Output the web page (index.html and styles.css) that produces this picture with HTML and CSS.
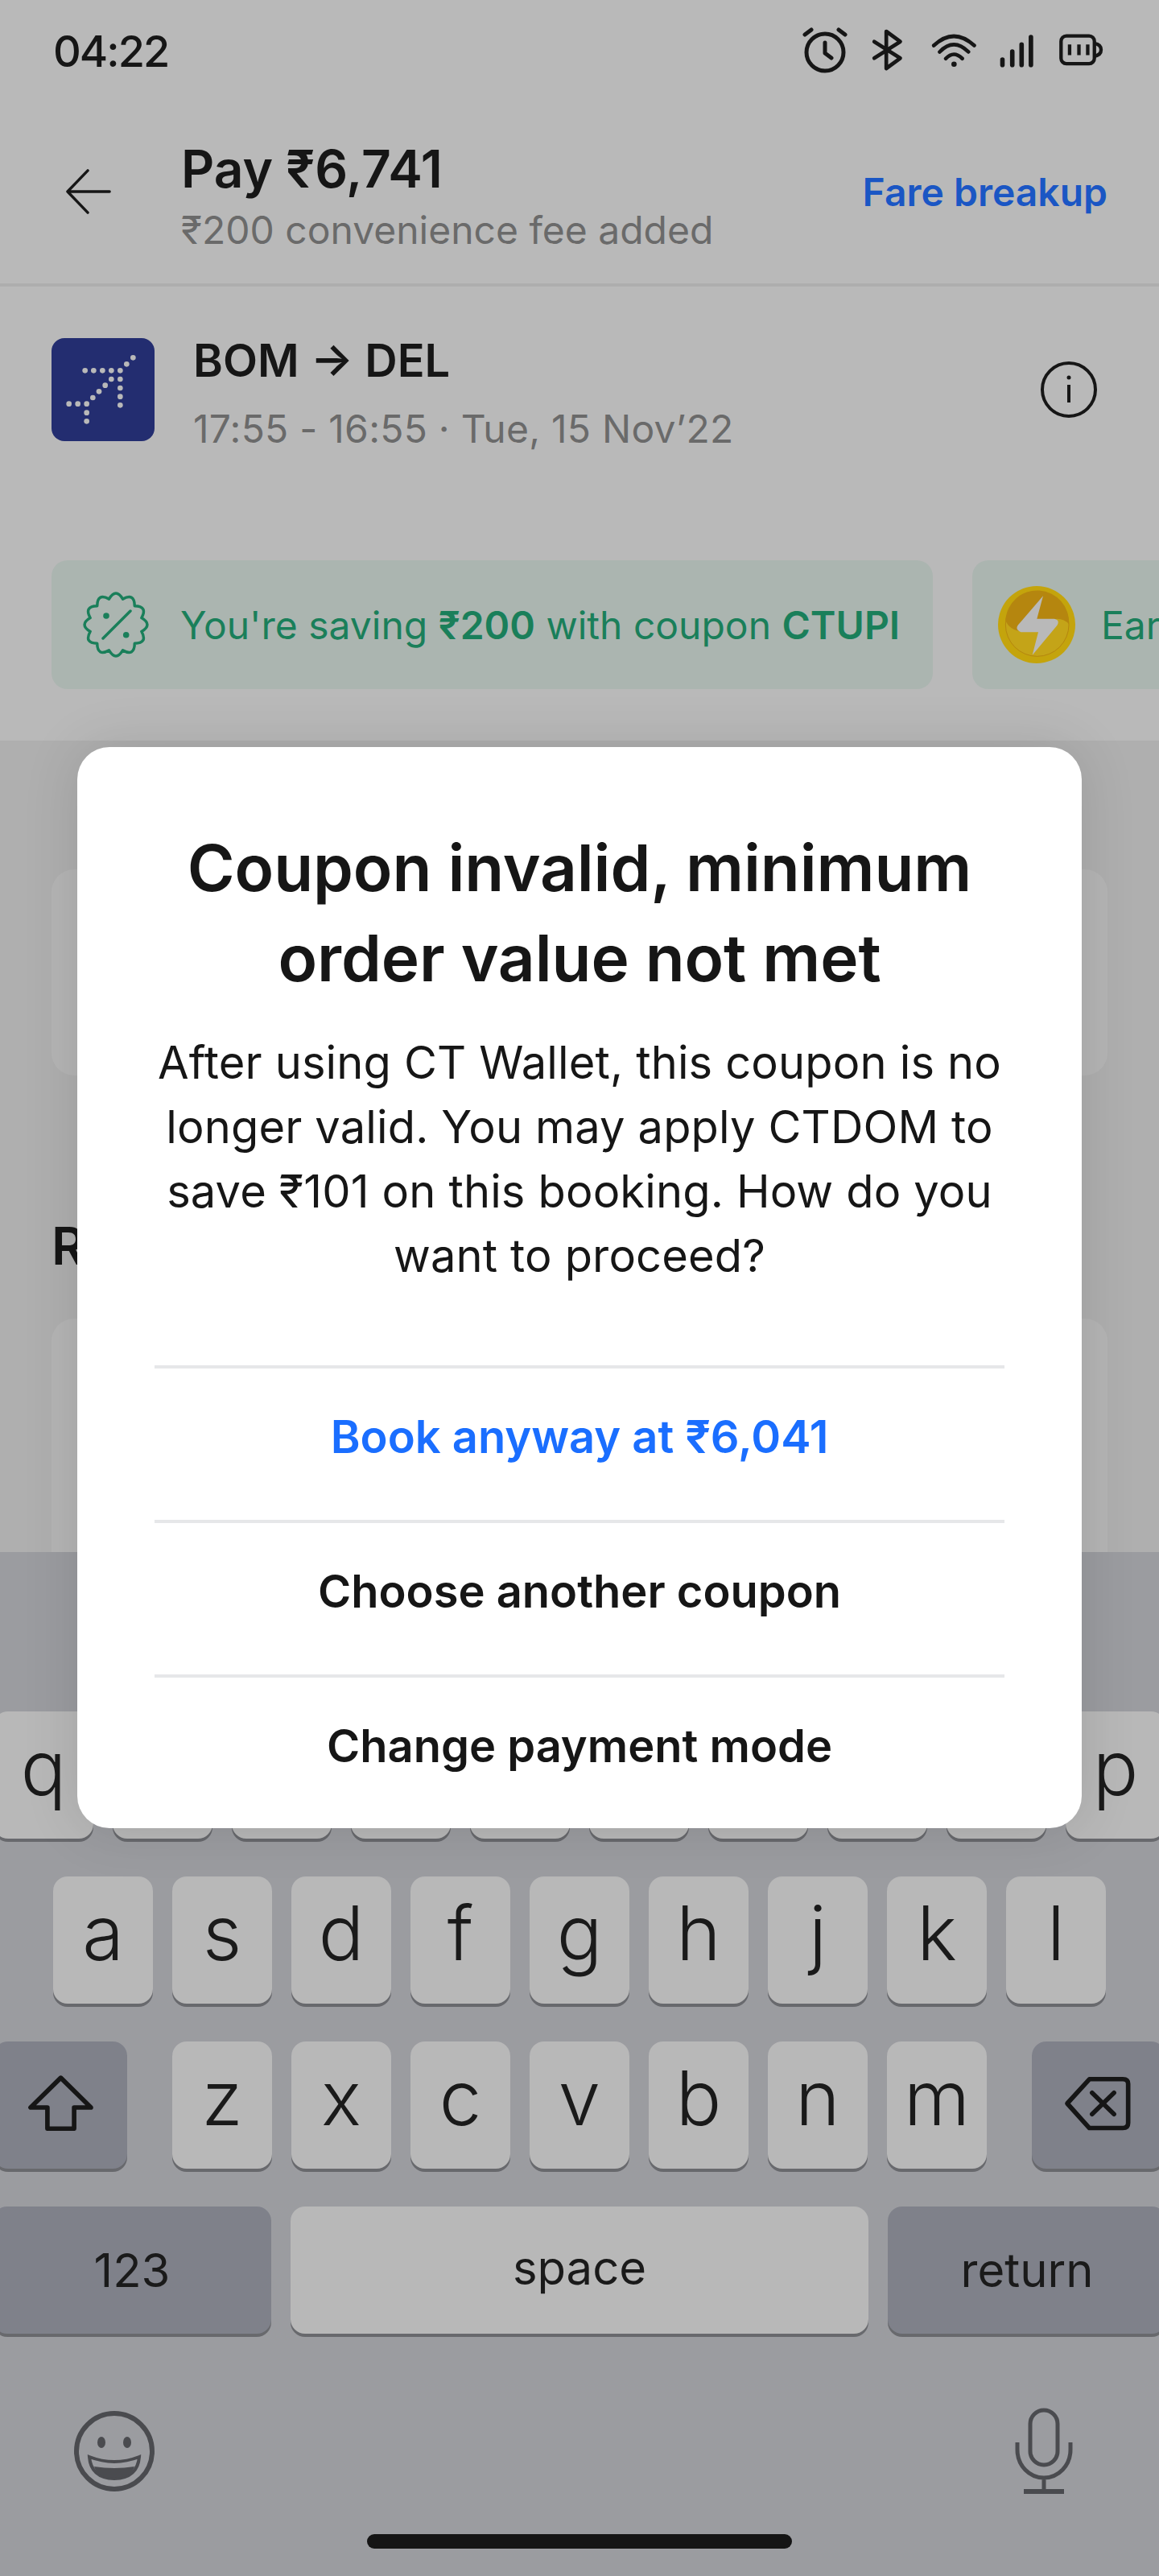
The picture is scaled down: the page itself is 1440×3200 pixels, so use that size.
FILE: index.html
```html
<!DOCTYPE html>
<html lang="en">
<head>
    <meta charset="UTF-8">
    <meta name="viewport" content="width=device-width, initial-scale=1.0">
    <title>Pay - Coupon invalid</title>
    <link rel="stylesheet" href="styles.css">
</head>
<body>
    <div class="screen">
        <div class="status-bar">
            <span class="status-time">04:22</span>
            <div class="status-icons">
                <svg class="icon-alarm" viewBox="0 0 60 60" fill="none" stroke="#161616" stroke-width="5" stroke-linecap="round" stroke-linejoin="round">
                    <circle cx="30" cy="33" r="23"/>
                    <path d="M30 21v13l8 6M5 11l8-6M55 11l-8-6"/>
                </svg>
                <svg class="icon-bt" viewBox="370 50 125 165" fill="none" stroke="#161616" stroke-width="14" stroke-linecap="round" stroke-linejoin="round">
                    <path d="M385 100L482 162L430 200V62L482 100L385 162"/>
                </svg>
                <svg class="icon-wifi" viewBox="580 60 180 130" fill="none" stroke="#161616" stroke-width="14" stroke-linecap="round">
                    <path d="M595 107Q670 37 747 107M617 131Q670 76 725 131M640 156Q670 124 702 156"/>
                    <circle cx="671" cy="177" r="10" fill="#161616" stroke="none"/>
                </svg>
                <svg class="icon-signal" viewBox="845 65 135 130" fill="none" stroke="#161616" stroke-width="17" stroke-linecap="round">
                    <path d="M858 165V185M895 135V185M930 108V185M965 80V185"/>
                </svg>
                <svg class="icon-battery" viewBox="1065 70 175 125" fill="none" stroke="#161616" stroke-width="13" stroke-linejoin="round">
                    <rect x="1078" y="80" width="125" height="104" rx="20"/>
                    <path d="M1203 108Q1228 112 1228 132Q1228 152 1203 156"/>
                    <path d="M1110 112V152M1145 112V152M1178 112V152"/>
                </svg>
            </div>
        </div>

        <div class="pay-header">
            <svg class="back-arrow" viewBox="0 0 60 60" fill="none" stroke="#161616" stroke-width="3.5" stroke-linecap="round" stroke-linejoin="round">
                <path d="M28 3L2 30L28 57M2 30H56"/>
            </svg>
            <div class="pay-title">
                <div class="pay-amount">Pay ₹6,741</div>
                <div class="pay-fee">₹200 convenience fee added</div>
            </div>
            <span class="fare-link">Fare breakup</span>
        </div>

        <div class="flight-row">
            <svg class="airline-logo" viewBox="72 60 384 384">
                <rect x="72" y="60" width="384" height="384" rx="48" fill="#232d70"/>
                <g fill="#b9b9b9">
                    <circle cx="197" cy="181" r="10"/><circle cx="229" cy="181" r="10"/><circle cx="262" cy="181" r="10"/>
                    <circle cx="295" cy="181" r="10"/><circle cx="328" cy="181" r="10"/><circle cx="295" cy="213" r="10"/>
                    <circle cx="328" cy="213" r="10"/><circle cx="328" cy="246" r="10"/><circle cx="328" cy="278" r="10"/>
                    <circle cx="328" cy="310" r="10"/><circle cx="272" cy="236" r="10"/><circle cx="249" cy="259" r="10"/>
                    <circle cx="226" cy="282" r="10"/><circle cx="203" cy="305" r="10"/><circle cx="170" cy="305" r="10"/>
                    <circle cx="137" cy="305" r="10"/><circle cx="203" cy="338" r="10"/><circle cx="203" cy="370" r="10"/>
                    <circle cx="352" cy="157" r="10"/><circle cx="376" cy="133" r="10"/>
                </g>
            </svg>
            <div class="flight-info">
                <div class="flight-route">BOM → DEL</div>
                <div class="flight-time">17:55 - 16:55 · Tue, 15 Nov’22</div>
            </div>
            <svg class="info-icon" viewBox="0 0 72 72" fill="none" stroke="#161616" stroke-width="4">
                <circle cx="36" cy="36" r="33"/>
                <path d="M36 30V52"/>
                <circle cx="36" cy="21" r="2.5" fill="#161616" stroke="none"/>
            </svg>
        </div>

        <div class="offer-strip">
            <div class="offer-pill offer-first">
                <svg class="offer-icon" viewBox="-46 -46 92 92" fill="none" stroke="#1a7f5a" stroke-width="3.5" stroke-linecap="round" stroke-linejoin="round">
                    <path d="M31.9 -8.5Q46 0 31.9 8.5Q39.8 23 23.3 23.3Q23 39.8 8.5 31.9Q0 46 -8.5 31.9Q-23 39.8 -23.3 23.3Q-39.8 23 -31.9 8.5Q-46 0 -31.9 -8.5Q-39.8 -23 -23.3 -23.3Q-23 -39.8 -8.5 -31.9Q0 -46 8.5 -31.9Q23 -39.8 23.3 -23.3Q39.8 -23 31.9 -8.5Z"/>
                    <path d="M-16 17L18 -17"/>
                    <circle cx="-12" cy="-11" r="3.8" fill="#1a7f5a" stroke="none"/>
                    <circle cx="12.7" cy="12.7" r="3.8" fill="#1a7f5a" stroke="none"/>
                </svg>
                <span>You're saving <b>₹200</b> with coupon <b>CTUPI</b></span>
            </div>
            <div class="offer-pill">
                <svg class="coin-icon" viewBox="60 113 288 288">
                    <circle cx="204" cy="257" r="144" fill="#c4a40c"/>
                    <circle cx="206" cy="257" r="118" fill="#c4a418" stroke="#b5860f" stroke-width="3"/>
                    <path d="M88 240A118 118 0 0 1 324 255Q300 225 250 240L160 284Q100 280 88 240Z" fill="#b5860f"/>
                    <path d="M228 150L205 235H270Q292 240 280 260L188 370L210 285H145Q122 275 135 258Z" fill="#b9b9b9"/>
                </svg>
                <span>Earn CT Wallet cash</span>
            </div>
        </div>

        <div class="pay-section">
            <div class="ghost-card ghost-short"></div>
            <div class="section-label">Recommended</div>
            <div class="ghost-card ghost-tall"></div>
        </div>

        <div class="keyboard">
            <div class="key-row">
                <div class="key">q</div><div class="key">w</div><div class="key">e</div><div class="key">r</div><div class="key">t</div>
                <div class="key">y</div><div class="key">u</div><div class="key">i</div><div class="key">o</div><div class="key">p</div>
            </div>
            <div class="key-row">
                <div class="key">a</div><div class="key">s</div><div class="key">d</div><div class="key">f</div><div class="key">g</div>
                <div class="key">h</div><div class="key">j</div><div class="key">k</div><div class="key">l</div>
            </div>
            <div class="key-row">
                <div class="key key-dark key-side">
                    <svg class="shift-icon" viewBox="100 180 250 210" fill="none" stroke="#161616" stroke-width="17" stroke-linejoin="round">
                        <path d="M225 192L112 303H175V382H275V303H338Z"/>
                    </svg>
                </div>
                <div class="key">z</div><div class="key">x</div><div class="key">c</div><div class="key">v</div><div class="key">b</div>
                <div class="key">n</div><div class="key">m</div>
                <div class="key key-dark key-side">
                    <svg class="delete-icon" viewBox="185 180 250 210" fill="none" stroke="#161616" stroke-width="17" stroke-linecap="round" stroke-linejoin="round">
                        <path d="M197 288L280 197H405Q425 197 425 215V360Q425 380 405 380H280Z"/>
                        <path d="M290 248L372 328M372 248L290 328"/>
                    </svg>
                </div>
            </div>
            <div class="key-row key-row-bottom">
                <div class="key key-dark key-wide key-small">123</div>
                <div class="key key-space key-small">space</div>
                <div class="key key-dark key-wide key-small">return</div>
            </div>
            <div class="kb-tools">
                <svg class="emoji-icon" viewBox="0 0 102 102" fill="none" stroke="#4a4b4f" stroke-width="6">
                    <circle cx="51" cy="51" r="47"/>
                    <ellipse cx="35" cy="40" rx="5" ry="7" fill="#4a4b4f" stroke="none"/>
                    <ellipse cx="67" cy="40" rx="5" ry="7" fill="#4a4b4f" stroke="none"/>
                    <path d="M20 58Q51 70 82 58Q80 84 51 85Q22 84 20 58Z" stroke-width="4"/>
                    <path d="M26 70Q51 74 76 70Q72 84 51 84Q30 84 26 70Z" fill="#4a4b4f" stroke="none"/>
                </svg>
                <svg class="mic-icon" viewBox="0 0 72 108" fill="none" stroke="#4a4b4f" stroke-width="5">
                    <rect x="19" y="3" width="34" height="68" rx="17"/>
                    <path d="M3 43V52C3 72 18 87 36 87C54 87 69 72 69 52V43M36 87V103"/>
                    <path d="M11 104H61" stroke-width="6"/>
                </svg>
            </div>
            <div class="home-bar"></div>
        </div>
    </div>

    <div class="coupon-modal">
        <h2 class="modal-title">Coupon invalid, minimum order value not met</h2>
        <p class="modal-text">After using CT Wallet, this coupon is no longer valid. You may apply CTDOM to save ₹101 on this booking. How do you want to proceed?</p>
        <div class="modal-action action-primary">Book anyway at ₹6,041</div>
        <div class="modal-action">Choose another coupon</div>
        <div class="modal-action">Change payment mode</div>
    </div>
</body>
</html>
```

FILE: styles.css
```css
* {
    box-sizing: border-box;
}
html, body {
    margin: 0;
    height: 3200px;
    overflow: hidden;
}
body {
    position: relative;
    font-family: Inter, "Liberation Sans", sans-serif;
    background-color: #b9b9b9;
    color: #161616;
}
svg {
    display: block;
    flex: none;
}
.screen {
    display: flex;
    flex-direction: column;
    width: 1440px;
    height: 3200px;
    overflow: hidden;
}

/* status bar */
.status-bar {
    display: flex;
    justify-content: space-between;
    align-items: center;
    height: 124px;
    padding: 0 68px 0 66px;
    flex: none;
}
.status-time {
    font-size: 54px;
    font-weight: 500;
    letter-spacing: -2px;
    padding-top: 2px;
}
.status-icons {
    display: flex;
    align-items: center;
}
.icon-alarm { width: 60px; height: 60px; margin-right: 26px; }
.icon-bt { width: 42px; height: 55px; margin-right: 32px; }
.icon-wifi { width: 60px; height: 43px; margin-right: 26px; }
.icon-signal { width: 45px; height: 43px; margin-right: 28px; }
.icon-battery { width: 58px; height: 42px; }

/* header */
.pay-header {
    display: flex;
    align-items: center;
    height: 232px;
    padding: 0 64px 0 82px;
    border-bottom: 4px solid #aeaeae;
    flex: none;
}
.back-arrow {
    width: 58px;
    height: 58px;
    margin-right: 85px;
}
.pay-title {
    flex: 1;
    padding-top: 12px;
}
.pay-amount {
    font-size: 64px;
    line-height: 84px;
    font-weight: 600;
}
.pay-fee {
    font-size: 48px;
    line-height: 68px;
    color: #6a6a6a;
}
.fare-link {
    font-size: 48px;
    font-weight: 600;
    color: #1a56c4;
}

/* flight */
.flight-row {
    display: flex;
    align-items: flex-start;
    padding: 52px 76px 0 64px;
    flex: none;
}
.airline-logo {
    width: 128px;
    height: 128px;
    margin: 12px 48px 0 0;
}
.flight-info {
    flex: 1;
}
.flight-route {
    font-size: 56px;
    line-height: 80px;
    font-weight: 600;
}
.flight-time {
    font-size: 48px;
    line-height: 90px;
    letter-spacing: 0.25px;
    color: #6a6a6a;
}
.info-icon {
    width: 72px;
    height: 72px;
    margin-top: 40px;
}

/* offers */
.offer-strip {
    display: flex;
    gap: 49px;
    margin-top: 118px;
    padding-left: 64px;
    flex: none;
}
.offer-pill {
    display: flex;
    align-items: center;
    flex: none;
    height: 160px;
    padding: 0 34px;
    border-radius: 20px;
    background-color: #abb5b0;
    font-size: 48px;
    color: #1a7f5a;
    white-space: nowrap;
}
.offer-pill b {
    font-weight: 600;
}
.offer-first {
    width: 1095px;
}
.offer-icon {
    width: 92px;
    height: 92px;
    margin-right: 34px;
}
.coin-icon {
    width: 96px;
    height: 96px;
    margin-right: 32px;
    margin-left: -2px;
}

/* section under the dialog */
.pay-section {
    flex: 1;
    margin-top: 64px;
    padding: 160px 64px 0;
    background-color: #afafaf;
    min-height: 0;
}
.ghost-card {
    border-radius: 28px;
    background-color: #b5b5b5;
}
.ghost-short {
    height: 256px;
}
.ghost-tall {
    height: 400px;
}
.section-label {
    margin: 170px 0 48px;
    font-size: 64px;
    line-height: 84px;
    font-weight: 600;
}

/* keyboard */
.keyboard {
    height: 1272px;
    padding-top: 198px;
    background-color: #9b9ca0;
    flex: none;
}
.key-row {
    display: flex;
    justify-content: center;
    gap: 24px;
    height: 158px;
    margin-bottom: 47px;
}
.key {
    display: flex;
    justify-content: center;
    align-items: center;
    flex: none;
    width: 124px;
    height: 158px;
    padding-bottom: 18px;
    border-radius: 18px;
    background-color: #b8b8b8;
    box-shadow: 0 4px 0 #68696d;
    font-size: 94px;
    font-weight: 300;
    color: #1a1a1a;
}
.key-dark {
    background-color: #7f818a;
}
.key-side {
    width: 166px;
    padding-bottom: 6px;
}
.key-side:first-child {
    margin-left: -8px;
    margin-right: 32px;
}
.key-side:last-child {
    margin-left: 32px;
    margin-right: -8px;
}
.key-small {
    font-size: 58px;
    font-weight: 400;
    padding-bottom: 6px;
}
.key-wide {
    width: 346px;
    padding-bottom: 0;
}
.key-space {
    width: 718px;
}
.key-row-bottom {
    margin-bottom: 0;
}
.shift-icon,
.delete-icon {
    width: 83px;
    height: 70px;
}
.delete-icon {
    margin-right: 4px;
}
.kb-tools {
    display: flex;
    justify-content: space-between;
    align-items: center;
    padding: 92px 107px 0 91px;
}
.emoji-icon {
    width: 102px;
    height: 102px;
}
.mic-icon {
    width: 72px;
    height: 108px;
}
.home-bar {
    width: 528px;
    height: 18px;
    margin: 49px auto 0;
    border-radius: 9px;
    background-color: #151515;
}

/* dialog */
.coupon-modal {
    position: absolute;
    left: 96px;
    top: 928px;
    width: 1248px;
    height: 1343px;
    padding: 94px 96px 0;
    border-radius: 40px;
    background-color: #fff;
    box-shadow: 0 0 70px rgba(0, 0, 0, 0.12);
    text-align: center;
}
.modal-title {
    margin: 0;
    font-size: 80px;
    line-height: 112px;
    font-weight: 600;
    letter-spacing: -0.1px;
}
.modal-text {
    margin: 34px 0 96px;
    font-size: 56px;
    line-height: 80px;
    letter-spacing: 0.15px;
}
.modal-action {
    height: 192px;
    border-top: 4px solid #e6e7e9;
    font-size: 56px;
    line-height: 170px;
    font-weight: 600;
}
.action-primary {
    color: #1a6eff;
}
```
